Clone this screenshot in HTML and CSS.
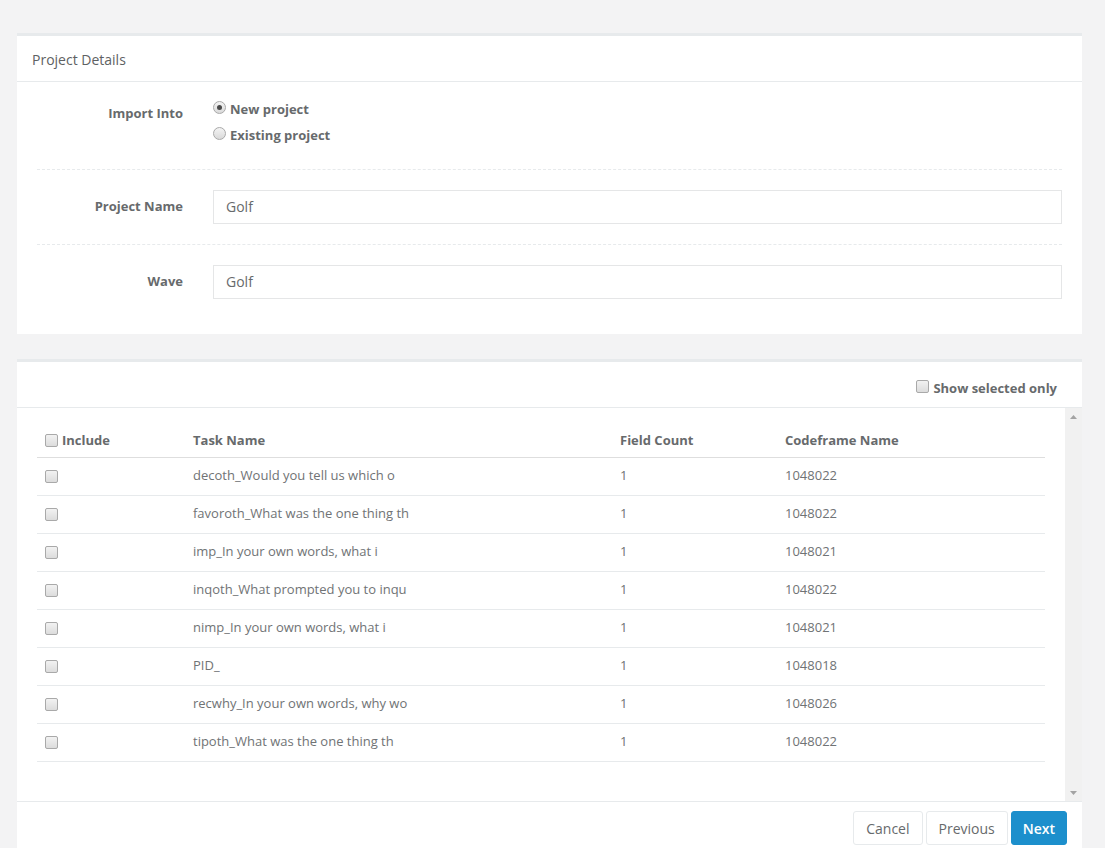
FILE: index.html
```html
<!DOCTYPE html>
<html lang="en">
<head>
<meta charset="utf-8">
<title>Import</title>
<link rel="stylesheet" href="styles.css">
</head>
<body>
<div class="page">
  <section class="panel">
    <div class="panel-title">Project Details</div>
    <div class="panel-body form">
      <div class="form-row first">
        <div class="form-label radio-label">Import Into</div>
        <div class="radios">
          <label class="radio-line"><span class="radio checked"></span>New project</label>
          <label class="radio-line"><span class="radio"></span>Existing project</label>
        </div>
      </div>
      <div class="sep"></div>
      <div class="form-row">
        <div class="form-label">Project Name</div>
        <div class="input">Golf</div>
      </div>
      <div class="sep"></div>
      <div class="form-row">
        <div class="form-label">Wave</div>
        <div class="input">Golf</div>
      </div>
    </div>
  </section>

  <section class="panel second">
    <div class="panel-title right">
      <label class="show-sel"><span class="cb"></span>Show selected only</label>
    </div>
    <div class="scroll-area">
      <div class="scroll-content">
        <table class="tasks">
          <colgroup>
            <col class="c1"><col class="c2"><col class="c3"><col class="c4">
          </colgroup>
          <thead>
            <tr>
              <th><span class="cb"></span>Include</th>
              <th>Task Name</th>
              <th>Field Count</th>
              <th>Codeframe Name</th>
            </tr>
          </thead>
          <tbody>
            <tr><td><span class="cb"></span></td><td>decoth_Would you tell us which o</td><td>1</td><td>1048022</td></tr>
            <tr><td><span class="cb"></span></td><td>favoroth_What was the one thing th</td><td>1</td><td>1048022</td></tr>
            <tr><td><span class="cb"></span></td><td>imp_In your own words, what i</td><td>1</td><td>1048021</td></tr>
            <tr><td><span class="cb"></span></td><td>inqoth_What prompted you to inqu</td><td>1</td><td>1048022</td></tr>
            <tr><td><span class="cb"></span></td><td>nimp_In your own words, what i</td><td>1</td><td>1048021</td></tr>
            <tr><td><span class="cb"></span></td><td>PID_</td><td>1</td><td>1048018</td></tr>
            <tr><td><span class="cb"></span></td><td>recwhy_In your own words, why wo</td><td>1</td><td>1048026</td></tr>
            <tr><td><span class="cb"></span></td><td>tipoth_What was the one thing th</td><td>1</td><td>1048022</td></tr>
          </tbody>
        </table>
      </div>
      <div class="scrollbar">
        <svg class="arrow" width="17" height="17" viewBox="0 0 17 17"><path d="M5 11 L8.5 7 L12 11 Z" fill="#a3a3a3"/></svg>
        <svg class="arrow" width="17" height="17" viewBox="0 0 17 17"><path d="M5 7 L8.5 11 L12 7 Z" fill="#a3a3a3"/></svg>
      </div>
    </div>
    <div class="panel-footer">
      <button class="btn">Cancel</button>
      <button class="btn">Previous</button>
      <button class="btn primary">Next</button>
    </div>
  </section>
</div>
</body>
</html>
```

FILE: styles.css
```css
html, body {
  margin: 0;
  padding: 0;
  background: #f3f3f4;
  font-family: "Open Sans", "Liberation Sans", sans-serif;
  font-size: 13px;
  color: #676a6c;
  overflow: hidden;
}

.page {
  padding: 33px 23px 0 17px;
}

.panel {
  background: #fff;
  border-top: 3px solid #e7eaec;
}

.panel.second {
  margin-top: 25px;
}

.panel-title {
  height: 45px;
  border-bottom: 1px solid #e7eaec;
  padding: 0 15px;
  font-size: 14px;
  line-height: 47px;
  color: #5e6163;
}

.panel-title.right {
  display: flex;
  justify-content: flex-end;
  padding: 16px 25px 0 15px;
  height: 29px;
  line-height: 20px;
}

.show-sel {
  display: flex;
  align-items: center;
  font-weight: 700;
  font-size: 13px;
  color: #676a6c;
  height: 20px;
}

.show-sel .cb {
  margin-right: 4px;
  margin-top: -4px;
}

/* form */
.form {
  padding: 17px 20px 35px 20px;
}

.form-row {
  display: grid;
  grid-template-columns: 146px 1fr;
  column-gap: 30px;
}

.form-label {
  text-align: right;
  font-weight: 700;
  line-height: 33px;
  color: #676a6c;
}

.form-label.radio-label {
  line-height: 20px;
  padding-top: 4px;
}

.radios {
  display: flex;
  flex-direction: column;
  gap: 6px;
}

.radio-line {
  display: flex;
  align-items: center;
  font-weight: 700;
  line-height: 20px;
  color: #676a6c;
}

.radio {
  width: 11px;
  height: 11px;
  border: 1px solid #a9a9a9;
  border-radius: 50%;
  background: linear-gradient(#f4f4f4, #d9d9d9);
  margin-right: 4px;
  margin-top: -4px;
  position: relative;
  box-sizing: content-box;
}

.radio.checked::after {
  content: "";
  position: absolute;
  left: 3px;
  top: 3px;
  width: 5px;
  height: 5px;
  border-radius: 50%;
  background: #4a4a4a;
}

.sep {
  border-top: 1px dashed #e7eaec;
  margin: 20px 0;
}

.form-row.first + .sep {
  margin-top: 24px;
}

.input {
  height: 32px;
  border: 1px solid #e5e6e7;
  padding: 0 12px;
  font-size: 14px;
  line-height: 31px;
  color: #676a6c;
}

/* checkbox */
.cb {
  display: inline-block;
  width: 11px;
  height: 11px;
  border: 1px solid #a9a9a9;
  border-radius: 2px;
  background: linear-gradient(#f2f2f2, #dcdcdc);
  vertical-align: middle;
  box-sizing: content-box;
}

/* table area */
.scroll-area {
  display: flex;
  height: 393px;
}

.scroll-content {
  flex: 1;
  padding: 15px 20px 0 20px;
}

.scrollbar {
  width: 17px;
  background: #f1f1f1;
  display: flex;
  flex-direction: column;
  justify-content: space-between;
}

.arrow {
  display: block;
}

.tasks {
  width: 100%;
  border-collapse: collapse;
  table-layout: fixed;
}

.c1 { width: 148px; }
.c2 { width: 427px; }
.c3 { width: 165px; }
.c4 { width: auto; }

.tasks th {
  text-align: left;
  font-weight: 700;
  padding: 8px;
  line-height: 18px;
  border-bottom: 1px solid #dedede;
  white-space: nowrap;
}

.tasks th .cb {
  margin-right: 4px;
  margin-top: -3px;
}

.tasks td {
  padding: 7px 8px 9px 8px;
  line-height: 21px;
  border-bottom: 1px solid #e7eaec;
  white-space: nowrap;
  color: #707375;
}

.tasks td .cb {
  margin-top: -1px;
}

/* footer */
.panel-footer {
  border-top: 1px solid #e7eaec;
  padding: 9px 15px 10px 15px;
  display: flex;
  justify-content: flex-end;
  gap: 3px;
}

.btn {
  height: 34px;
  padding: 0 12px;
  border: 1px solid #e7eaec;
  border-radius: 3px;
  background: #fff;
  font-family: "Open Sans", "Liberation Sans", sans-serif;
  font-size: 14px;
  color: #676a6c;
}

.btn.primary {
  background: #1c8fcc;
  border-color: #1c8fcc;
  color: #fff;
  font-weight: 600;
  padding: 0 11px;
}
```
